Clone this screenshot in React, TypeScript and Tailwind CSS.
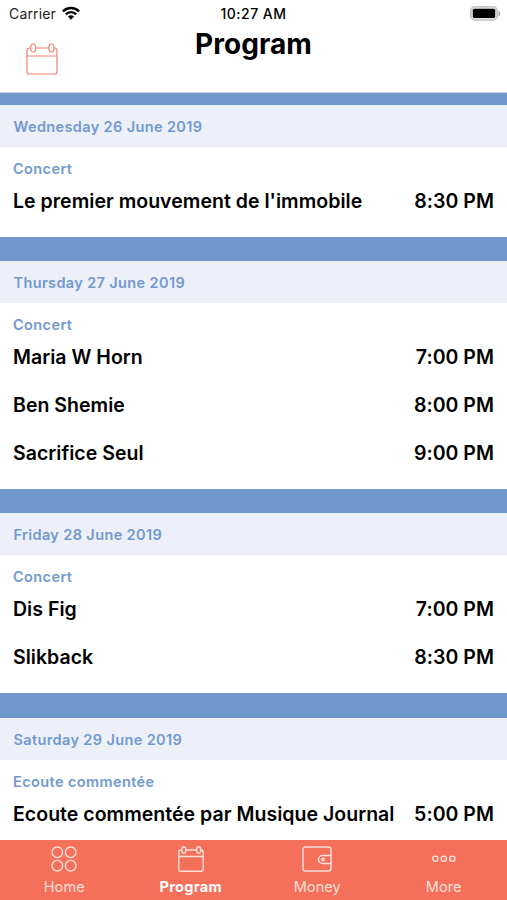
type Show = { title: string; time: string };
type Day = { date: string; kind: string; gap: string; shows: Show[] };

const days: Day[] = [
  {
    date: "Wednesday 26 June 2019",
    kind: "Concert",
    gap: "mt-0",
    shows: [{ title: "Le premier mouvement de l'immobile", time: "8:30 PM" }],
  },
  {
    date: "Thursday 27 June 2019",
    kind: "Concert",
    gap: "mt-6",
    shows: [
      { title: "Maria W Horn", time: "7:00 PM" },
      { title: "Ben Shemie", time: "8:00 PM" },
      { title: "Sacrifice Seul", time: "9:00 PM" },
    ],
  },
  {
    date: "Friday 28 June 2019",
    kind: "Concert",
    gap: "mt-[24.400px]",
    shows: [
      { title: "Dis Fig", time: "7:00 PM" },
      { title: "Slikback", time: "8:30 PM" },
    ],
  },
  {
    date: "Saturday 29 June 2019",
    kind: "Ecoute commentée",
    gap: "mt-[24.600px]",
    shows: [{ title: "Ecoute commentée par Musique Journal", time: "5:00 PM" }],
  },
];

function CalendarIcon({ className, stroke }: { className: string; stroke: number }) {
  return (
    <svg viewBox="0 0 32 32" className={className} fill="none" stroke="currentColor" strokeWidth={stroke}>
      <path d="M4.500 5H3.300C1.900 5 1 5.900 1 7.300v21.400C1 30.100 1.900 31 3.300 31h25.400c1.400 0 2.300-.9 2.300-2.300V7.300C31 5.900 30.100 5 28.700 5h-.7M9.800 5h13M1 13h30" />
      <ellipse cx="7.200" cy="5" rx="2.600" ry="4" />
      <ellipse cx="25.400" cy="5" rx="2.600" ry="4" />
    </svg>
  );
}

function HomeIcon() {
  return (
    <svg viewBox="0 0 26 26" className="size-[26px]" fill="none" stroke="currentColor" strokeWidth="1.4">
      <circle cx="6.300" cy="6.300" r="5.300" />
      <circle cx="19.700" cy="6.300" r="5.300" />
      <circle cx="6.300" cy="19.700" r="5.300" />
      <circle cx="19.700" cy="19.700" r="5.300" />
    </svg>
  );
}

function WalletIcon() {
  return (
    <svg viewBox="0 0 30 26" className="h-[26px] w-[30px]" fill="none" stroke="currentColor" strokeWidth="1.5">
      <rect x="1" y="1" width="28" height="24" rx="2.500" />
      <path d="M29 9.500h-8.500a4 4 0 0 0 0 8H29" />
      <circle cx="21" cy="13.500" r="1.200" />
    </svg>
  );
}

function MoreIcon() {
  return (
    <svg viewBox="0 0 24 26" className="h-[26px] w-6" fill="none" stroke="currentColor" strokeWidth="1.4">
      <circle cx="3.300" cy="12.700" r="2.600" />
      <circle cx="11.800" cy="12.700" r="2.600" />
      <circle cx="20.300" cy="12.700" r="2.600" />
    </svg>
  );
}

function StatusBar() {
  return (
    <div className="grid h-7 grid-cols-3 items-center px-[9px] text-[14px] leading-7">
      <div className="flex items-center gap-[6px] text-[#222]">
        <span className="tracking-[0.15px]">Carrier</span>
        <svg viewBox="0 0 18 14" className="-mt-0.5 h-[14px] w-[18px]" fill="none" stroke="#000" strokeWidth="2.400">
          <path d="M.9 5.300a11.500 11.500 0 0 1 16.200 0M3.800 8.300a7.300 7.300 0 0 1 10.400 0" />
          <path d="M5.900 10.600a4.400 4.400 0 0 1 6.200 0L9 13.700Z" fill="#000" stroke="none" />
        </svg>
      </div>
      <div className="text-center font-medium tracking-[0.5px] text-black">10:27 AM</div>
      <div className="-mr-[3px] -mt-0.5 flex justify-end">
        <svg viewBox="0 0 31 15" className="h-[15px] w-[31px]">
          <rect x=".8" y=".8" width="26.400" height="13.200" rx="4" fill="#e4e4e4" stroke="#c4c4c4" strokeWidth="1.600" />
          <path d="M28.500 4.500c2.500 1 2.500 5 0 6Z" fill="#aaa" />
          <rect x="2.800" y="2.800" width="22.400" height="9.200" rx="1.500" fill="#000" />
        </svg>
      </div>
    </div>
  );
}

function DaySection({ day }: { day: Day }) {
  return (
    <section className={day.gap}>
      <h2 className="h-[42px] bg-[#edf0f9] px-[13.500px] text-[14.500px] font-semibold leading-[43px] tracking-[0.37px] text-[#7199d0]">
        {day.date}
      </h2>
      <div className="bg-white px-[13px]">
        <h3 className="h-[42px] text-[14.500px] font-semibold leading-[43px] tracking-[0.4px] text-[#7199d0]">{day.kind}</h3>
        {day.shows.map((show) => (
          <div key={show.title} className="flex h-12 items-start justify-between text-[19.500px] font-semibold leading-6 tracking-[0.03px] text-black">
            <span>{show.title}</span>
            <span>{show.time}</span>
          </div>
        ))}
      </div>
    </section>
  );
}

export default function App() {
  return (
    <div className="flex h-[900px] w-[507px] flex-col overflow-hidden bg-[#6f97cc] font-['Inter',sans-serif]">
      <header className="h-[93px] shrink-0 border-b border-[#c5d5ea] bg-white">
        <StatusBar />
        <div className="grid grid-cols-[1fr_auto_1fr] items-start">
          <CalendarIcon className="ml-[26px] mt-[15px] size-8 text-[#f5806c]" stroke={1.2} />
          <h1 className="text-[28px] font-bold leading-8 tracking-[0.05px] text-black">Program</h1>
        </div>
      </header>
      <main className="min-h-0 flex-1 overflow-hidden pt-3">
        {days.map((day) => (
          <DaySection key={day.date} day={day} />
        ))}
      </main>
      <nav className="grid h-[60px] shrink-0 grid-cols-4 bg-[#f4705a] pt-[6px] pl-[1px] text-[14.500px] leading-[19px] text-[#fde0da]">
        <div className="flex flex-col items-center gap-[5px]">
          <HomeIcon />
          <span className="tracking-[0.1px]">Home</span>
        </div>
        <div className="flex flex-col items-center gap-[5px]">
          <CalendarIcon className="size-[26px]" stroke={1.7} />
          <span className="font-bold tracking-[0.3px] text-white">Program</span>
        </div>
        <div className="flex flex-col items-center gap-[5px]">
          <WalletIcon />
          <span className="tracking-[0.1px]">Money</span>
        </div>
        <div className="flex flex-col items-center gap-[5px]">
          <MoreIcon />
          <span className="tracking-[0.1px]">More</span>
        </div>
      </nav>
    </div>
  );
}
